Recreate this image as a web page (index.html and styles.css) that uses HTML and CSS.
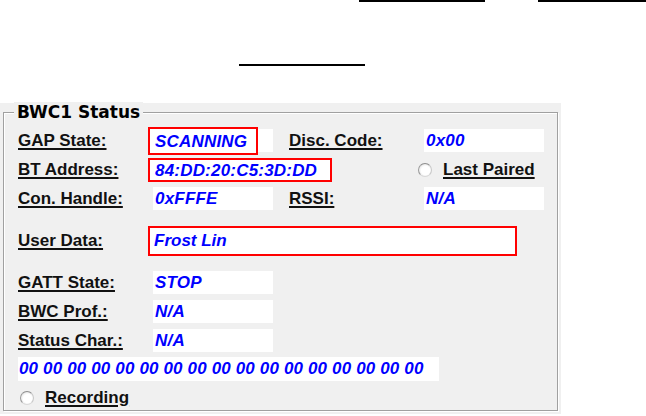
FILE: index.html
```html
<!DOCTYPE html>
<html lang="en">
<head>
  <meta charset="UTF-8" />
  <meta name="viewport" content="width=device-width, initial-scale=1.0" />
  <title>BWC1 Status</title>
  <link rel="stylesheet" href="styles.css">
</head>
<body>
  <div class="rules">
    <span class="rule rule-a"></span>
    <span class="rule rule-b"></span>
  </div>
  <div class="rules rules-mid">
    <span class="rule rule-c"></span>
  </div>

  <div class="panel">
    <div class="group">
      <div class="legend">BWC1 Status</div>

      <div class="row">
        <span class="lbl">GAP State:</span>
        <span class="val"><span class="mark mark-gap">SCANNING</span></span>
        <span class="lbl lbl-right">Disc. Code:</span>
        <span class="val">0x00</span>
      </div>

      <div class="row">
        <span class="lbl">BT Address:</span>
        <span class="val"><span class="mark mark-addr">84:DD:20:C5:3D:DD</span></span>
        <span class="option option-paired"><span class="radio"></span><span class="lbl-plain">Last Paired</span></span>
      </div>

      <div class="row">
        <span class="lbl">Con. Handle:</span>
        <span class="val">0xFFFE</span>
        <span class="lbl lbl-right">RSSI:</span>
        <span class="val">N/A</span>
      </div>

      <div class="row row-user">
        <span class="lbl">User Data:</span>
        <span class="user-box">Frost Lin</span>
      </div>

      <div class="row row-gatt">
        <span class="lbl">GATT State:</span>
        <span class="val">STOP</span>
      </div>

      <div class="row">
        <span class="lbl">BWC Prof.:</span>
        <span class="val">N/A</span>
      </div>

      <div class="row">
        <span class="lbl">Status Char.:</span>
        <span class="val">N/A</span>
      </div>

      <div class="row row-hex">
        <span class="hex">00 00 00 00 00 00 00 00 00 00 00 00 00 00 00 00 00</span>
      </div>

      <div class="row">
        <span class="option option-rec"><span class="radio"></span><span class="lbl-plain">Recording</span></span>
      </div>
    </div>
  </div>
</body>
</html>
```

FILE: styles.css
```css
body {
  margin: 0;
  padding: 0;
  background-color: #fff;
  font-family: 'Liberation Sans', Arial, sans-serif;
  font-size: 17px;
  color: #000;
}
.rules {
  display: flex;
  height: 2px;
}
.rule {
  display: block;
  height: 2px;
  background-color: #000;
}
.rule-a {
  margin-left: 359px;
  width: 126px;
}
.rule-b {
  margin-left: 53px;
  width: 108px;
}
.rules-mid {
  margin-top: 62px;
}
.rule-c {
  margin-left: 239px;
  width: 126px;
}
.panel {
  margin-top: 37px;
  width: 561px;
  height: 311px;
  box-sizing: border-box;
  padding: 9px 0 0 3px;
  background-color: #f0f0f0;
}
.group {
  position: relative;
  width: 555px;
  height: 299px;
  box-sizing: border-box;
  padding: 16px 0 0 14px;
  border: 1px solid #a0a0a0;
  box-shadow: 1px 1px 0 #fff, inset 1px 1px 0 #fff;
}
.legend {
  position: absolute;
  top: -11px;
  left: 10px;
  padding: 0 3px;
  line-height: 20px;
  background-color: #f0f0f0;
  font-family: 'DejaVu Sans', Verdana, sans-serif;
  font-weight: bold;
  font-size: 17px;
}
.row {
  display: flex;
  align-items: center;
  height: 23px;
  line-height: 23px;
  margin-bottom: 6px;
}
.lbl,
.lbl-plain {
  font-weight: bold;
  text-decoration: underline;
  text-decoration-thickness: 2px;
  text-underline-offset: 2px;
  color: #111;
}
.lbl {
  flex: none;
  width: 135px;
}
.lbl-right {
  margin-left: 16px;
}
.val {
  position: relative;
  flex: none;
  width: 120px;
  height: 23px;
  box-sizing: border-box;
  padding-left: 2px;
  background-color: #fff;
  color: #0000ff;
  font-weight: bold;
  font-style: italic;
  letter-spacing: 0.2px;
  white-space: nowrap;
}
.mark {
  position: absolute;
  left: -5px;
  display: flex;
  align-items: center;
  box-sizing: border-box;
  padding-left: 5px;
  border: 2px solid #ff0000;
  background-color: #fff;
}
.mark-gap {
  top: -2px;
  width: 110px;
  height: 28px;
}
.mark-addr {
  top: 0;
  width: 184px;
  height: 24px;
}
.option {
  display: flex;
  align-items: center;
}
.option-paired {
  margin-left: 145px;
}
.option-rec {
  margin-left: 2px;
}
.radio {
  flex: none;
  width: 14px;
  height: 14px;
  box-sizing: border-box;
  margin-right: 11px;
  border-radius: 50%;
  border: 1px solid #a6a6a6;
  border-color: #8e8e8e #c8c8c8 #d8d8d8 #9a9a9a;
  background: radial-gradient(circle at 55% 55%, #fff 0 45%, #ececec 70%, #d6d6d6 100%);
}
.row-user {
  height: 30px;
  line-height: 30px;
  margin-top: 16px;
  margin-bottom: 15px;
}
.user-box {
  width: 369px;
  height: 30px;
  box-sizing: border-box;
  margin-left: -5px;
  padding-left: 4px;
  line-height: 26px;
  border: 2px solid #ff0000;
  background-color: #fff;
  color: #0000ff;
  font-weight: bold;
  font-style: italic;
}
.row-hex {
  height: 24px;
  line-height: 24px;
  margin-top: -1px;
  margin-bottom: 5px;
}
.hex {
  width: 421px;
  height: 24px;
  padding-left: 1px;
  box-sizing: border-box;
  background-color: #fff;
  color: #0000ff;
  font-weight: bold;
  font-style: italic;
  letter-spacing: 0.15px;
  white-space: nowrap;
}
```
